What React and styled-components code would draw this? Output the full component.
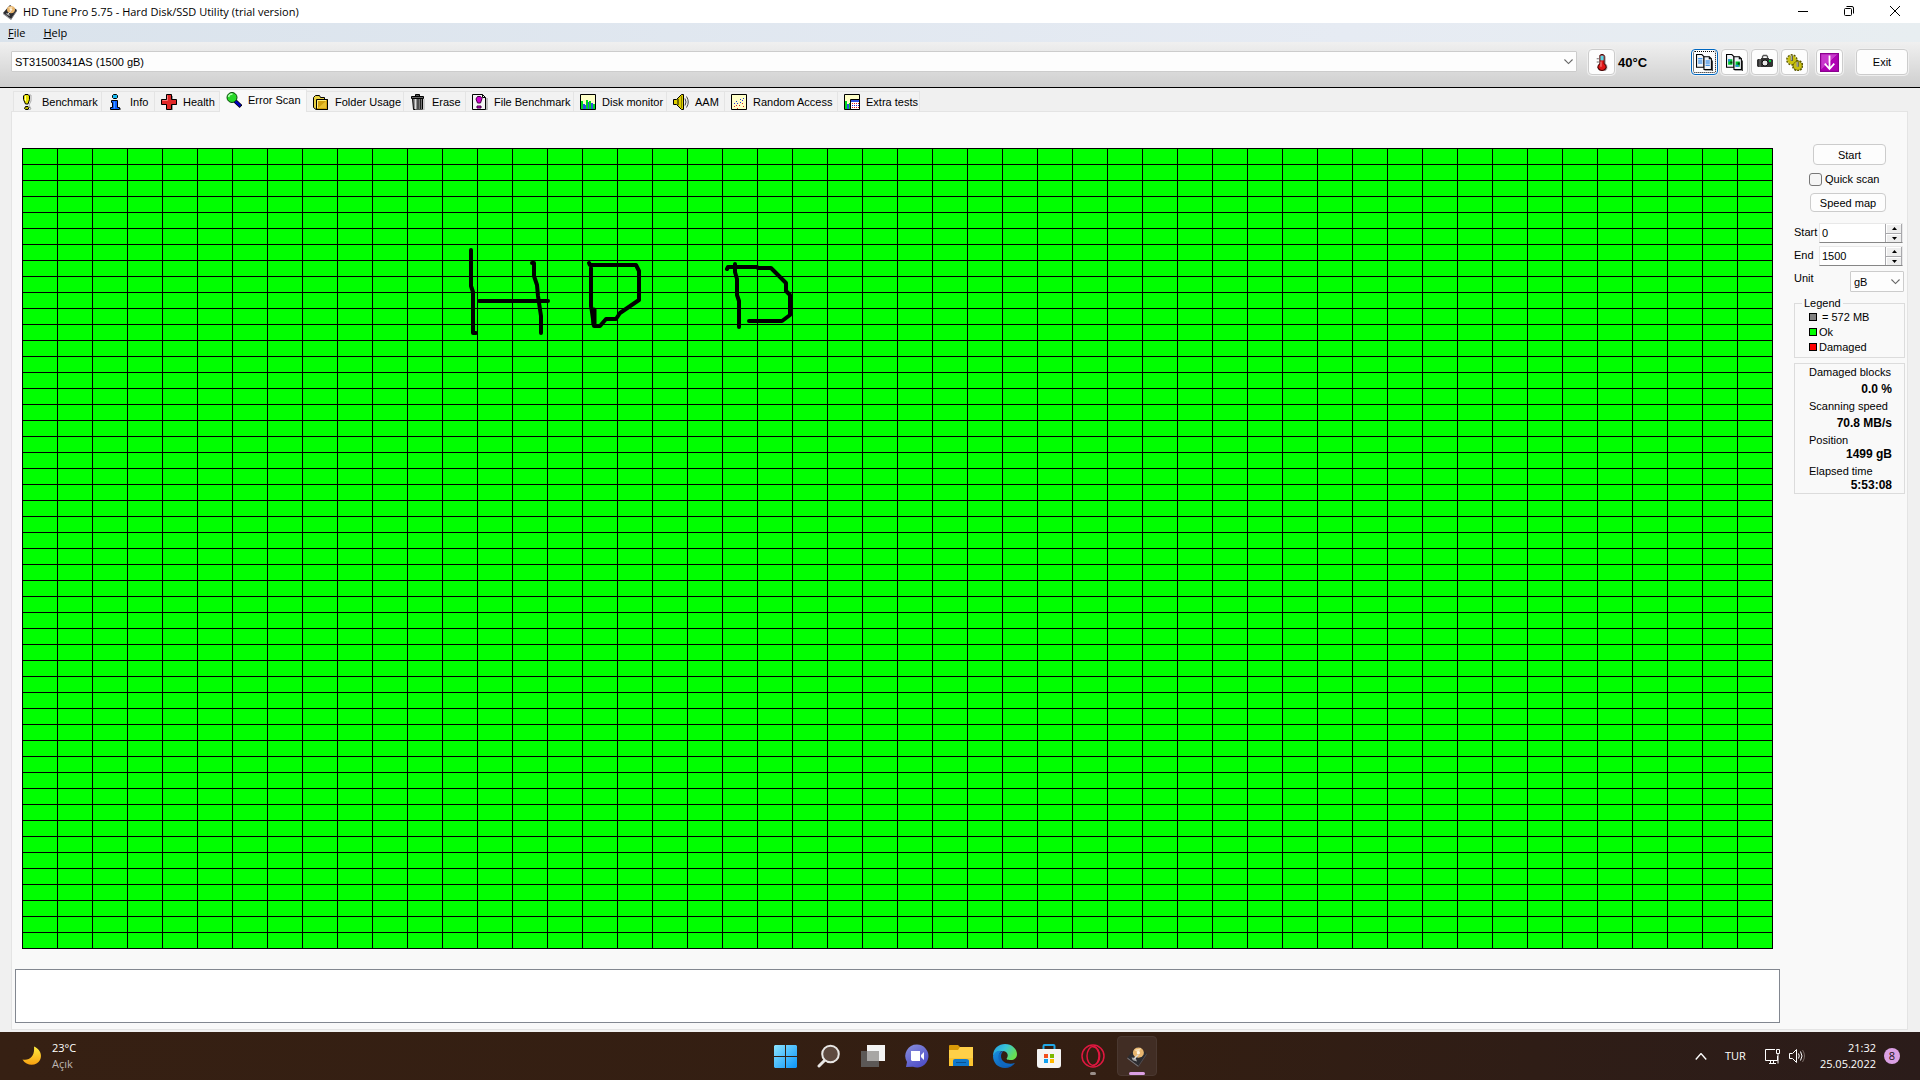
import React, { useState } from 'react';
import styled, { createGlobalStyle, css } from 'styled-components';

const GlobalStyle = createGlobalStyle`
  * {
    box-sizing: border-box;
  }
  body {
    margin: 0;
    background: #f0f0f0;
    color: #000;
    font-family: 'Liberation Sans', Arial, sans-serif;
    font-size: 11px;
  }
  button, input, select, textarea {
    font: inherit;
    color: inherit;
    margin: 0;
  }
`;

const Desktop = styled.div`
  min-height: 100vh;
  display: flex;
  flex-direction: column;
`;

/* window frame */

const TitleBar = styled.header`
  height: 23px;
  padding: 0 2px;
  display: flex;
  align-items: flex-start;
  background: #fff;
`;

const Title = styled.h1`
  flex: 1;
  display: flex;
  align-items: center;
  gap: 5px;
  margin: 0;
  height: 23px;
  font: 400 11px 'Open Sans', sans-serif;
`;

const WindowButton = styled.button`
  width: 46px;
  height: 21px;
  padding: 0;
  border: 0;
  background: none;
  display: flex;
  align-items: center;
  justify-content: center;
`;

const MenuBar = styled.nav`
  height: 19px;
  padding: 0 8px;
  display: flex;
  align-items: center;
  gap: 18px;
  background: linear-gradient(90deg, #dae3ec, #e6ebf3 70%, #e8eef1);
`;

const MenuItem = styled.button`
  padding: 0;
  border: 0;
  background: none;
  font: 400 11px 'Open Sans', sans-serif;
`;

/* toolbar */

const Toolbar = styled.div`
  height: 46px;
  padding: 7px 12px 0 11px;
  display: flex;
  align-items: flex-start;
  background: linear-gradient(#f0f0f0, #cecece);
  border-bottom: 1px solid #000;
`;

const SelectBox = styled.div`
  position: relative;
  flex: ${({ $wide }) => ($wide ? '1' : '0 0 54px')};
  height: 21px;
  margin-top: 2px;

  select {
    appearance: none;
    width: 100%;
    height: 100%;
    padding: 0 18px 0 3px;
    border: 1px solid #ccc;
    border-radius: 1px;
    background: #fdfdfd;
    outline: 0;
  }
  svg {
    position: absolute;
    right: 4px;
    top: 8px;
    pointer-events: none;
  }
`;

const PushButton = styled.button`
  width: ${({ $width }) => $width || 27}px;
  height: ${({ $height }) => $height || 26}px;
  padding: 0;
  display: flex;
  align-items: center;
  justify-content: center;
  border: 1px solid #ccc;
  border-radius: 4px;
  background: #fdfdfd;
  ${({ $raised }) => $raised && css`
    box-shadow: 0 0 0 1px #efefef;
  `}
  ${({ $focused }) => $focused && css`
    border-color: #0067c0;
    outline: 1px dotted #000;
    outline-offset: -3px;
  `}
`;

const Thermometer = styled.div`
  display: flex;
  align-items: center;
  gap: 3px;
  width: 103px;
  margin-left: 11px;
  font-size: 13px;
  font-weight: 700;
`;

const ToolGroup = styled.div`
  display: flex;
  gap: 3px;
  margin-right: ${({ $end }) => $end}px;
`;

/* tabs */

const TabBar = styled.div`
  display: flex;
  align-items: flex-end;
  height: 23px;
  padding: 0 13px;
`;

const Tab = styled.button`
  flex: 0 0 ${({ $width }) => $width}px;
  height: ${({ $active }) => ($active ? 23 : 20)}px;
  padding: 0 0 0 6px;
  display: flex;
  align-items: center;
  gap: 6px;
  white-space: nowrap;
  border: 1px solid #e4e4e4;
  border-width: 1px 1px 0 0;
  background: ${({ $active }) => ($active ? '#f9f9f9' : '#f2f2f2')};
  ${({ $active }) => $active && css`
    margin-bottom: -1px;
    padding-bottom: 2px;
    z-index: 1;
  `}
  &:first-child {
    border-left-width: 1px;
  }
`;

const Panel = styled.main`
  flex: 1;
  display: flex;
  gap: 14px;
  margin: 0 12px 2px 11px;
  padding: 0 2px 6px 3px;
  border: 1px solid #e4e4e4;
  background: #f9f9f9;
`;

const ScanArea = styled.section`
  flex: 1;
  display: flex;
  flex-direction: column;
  gap: 20px;
  padding-top: 36px;
`;

const BlockMap = styled.div`
  position: relative;
  flex: 1;
  margin: 0 7px;
  display: grid;
  grid-template-columns: repeat(50, 1fr);
  grid-template-rows: repeat(50, 1fr);
  gap: 1px;
  border: 1px solid #000;
  background: #000;
`;

const Block = styled.i`
  background: #0f0;
`;

const Scribble = styled.svg`
  position: absolute;
  inset: -1px;
  width: calc(100% + 2px);
  height: calc(100% + 2px);
  fill: none;
  stroke: #000;
  stroke-width: 4;
  stroke-linejoin: round;
  stroke-linecap: round;
`;

const LogBox = styled.textarea`
  height: 54px;
  resize: none;
  border: 1px solid #828790;
  background: #fff;
  outline: 0;
`;

/* sidebar */

const Sidebar = styled.aside`
  flex: 0 0 111px;
  display: flex;
  flex-direction: column;
  padding-top: 32px;
`;

const Actions = styled.div`
  display: flex;
  flex-direction: column;
  align-items: flex-end;
  gap: 6px;
  padding-right: 19px;
  margin-bottom: 11px;
`;

const CheckLabel = styled.label`
  align-self: flex-start;
  display: flex;
  align-items: center;
  gap: 3px;
  height: 16px;
  margin-left: 15px;

  input {
    appearance: none;
    width: 13px;
    height: 13px;
    border: 1px solid #777;
    border-radius: 3px;
    background: #f5f5f5;
  }
`;

const Field = styled.div`
  display: flex;
  align-items: flex-start;
  justify-content: space-between;
  height: ${({ $height }) => $height || 20}px;
  padding-right: ${({ $height }) => ($height ? 1 : 2)}px;
  margin-bottom: 3px;

  > label {
    line-height: 18px;
  }
`;

const Spinner = styled.div`
  width: 84px;
  height: 20px;
  display: flex;
  background: #fff;
  border: 1px solid #e8e8e8;
  border-bottom-color: #868686;

  input {
    flex: 1;
    min-width: 0;
    padding: 0 2px;
    border: 0;
    background: none;
    outline: 0;
  }
  div {
    width: 17px;
    display: grid;
    grid-template-rows: 1fr 1fr;
    gap: 1px;
    padding: 0 1px;
    background: #a8a8ac;
  }
  button {
    display: flex;
    align-items: center;
    justify-content: center;
    padding: 0;
    border: 1px solid #fff;
    border-width: 1px 0 0 1px;
    background: #eee;
  }
`;

const Legend = styled.fieldset`
  min-width: 0;
  margin: 0 0 5px;
  padding: 0 0 3px 14px;
  border: 1px solid #dcdcdc;

  legend {
    margin-left: -7px;
    padding: 0 2px;
    line-height: 12px;
  }
`;

const LegendItem = styled.div`
  display: flex;
  align-items: center;
  gap: ${({ $gap }) => $gap}px;
  height: 15px;

  span {
    width: 8px;
    height: 8px;
    border: 1px solid #000;
    background: ${({ $color }) => $color};
  }
`;

const Stats = styled.dl`
  margin: 0;
  padding: 1px 12px 1px 14px;
  display: flex;
  flex-direction: column;
  gap: 3px;
  border: 1px solid #dcdcdc;
  line-height: 14px;
`;

const Stat = styled.div`
  display: flex;
  flex-direction: column;
  gap: ${({ $roomy }) => ($roomy ? 3 : 0)}px;
  white-space: nowrap;

  dd {
    margin: 0;
    text-align: right;
    font-size: 12px;
    font-weight: 700;
  }
`;

/* taskbar */

const Taskbar = styled.footer`
  height: 48px;
  display: grid;
  grid-template-columns: 1fr auto 1fr;
  align-items: center;
  background: linear-gradient(90deg, #362013, #331e12 60%, #2b1c1a);
  color: #fff;
  font: 400 11px/16px 'Open Sans', sans-serif;
`;

const Weather = styled.button`
  display: flex;
  align-items: center;
  gap: 10px;
  padding: 0 0 0 22px;
  border: 0;
  background: none;
  text-align: left;

  small {
    display: block;
    font-size: 11px;
    color: #bdb6b2;
  }
`;

const Pinned = styled.div`
  display: flex;
  gap: 4px;
  padding-left: 2px;
`;

const PinnedApp = styled.button`
  position: relative;
  width: 40px;
  height: 40px;
  padding: 0;
  display: flex;
  align-items: center;
  justify-content: center;
  border: 1px solid ${({ $active }) => ($active ? '#4a3830' : 'transparent')};
  border-radius: 4px;
  background: ${({ $active }) => ($active ? '#412d24' : 'none')};

  &::after {
    content: '';
    display: ${({ $running, $active }) => ($running || $active ? 'block' : 'none')};
    position: absolute;
    bottom: 0;
    width: ${({ $active }) => ($active ? 16 : 6)}px;
    height: 3px;
    border-radius: 2px;
    background: ${({ $active }) => ($active ? '#dba0e4' : '#9a8f8a')};
  }
`;

const Tray = styled.div`
  display: flex;
  align-items: center;
  justify-content: flex-end;
  padding-right: 20px;

  button {
    padding: 0;
    border: 0;
    background: none;
    display: flex;
    align-items: center;
  }
`;

const TrayGroup = styled.div`
  display: flex;
  align-items: center;
  gap: ${({ $gap }) => $gap}px;
  margin-right: ${({ $end }) => $end}px;
`;

const Clock = styled.time`
  text-align: right;
  margin-right: 8px;
`;

const Badge = styled.span`
  width: 16px;
  height: 16px;
  border-radius: 50%;
  background: #dba0e4;
  color: #1c1016;
  text-align: center;
`;

/* icons */

const Icon = ({ size = 16, children, ...rest }) => (
  <svg width={size} height={size} viewBox="0 0 16 16" fill="none" aria-hidden="true" {...rest}>
    {children}
  </svg>
);

const DiskIcon = ({ size = 16 }) => (
  <Icon size={size}>
    <path d="M1 9 8 1l7 5-6 9z" fill="#2c2c30" />
    <path d="m1 9 8 6v1L1 10z" fill="#77777c" />
    <path d="m9 15 6-9v1l-6 9z" fill="#505056" />
    <ellipse cx="9" cy="5.6" rx="4" ry="3.7" fill="#e8b56e" />
    <path d="M6 3.5 9 5.6l2-3.2z" fill="#f8ddb0" />
    <circle cx="9" cy="5.6" r="1.2" fill="#fff4e0" />
    <path d="m4 9 3 .5 1 2.5-3-1z" fill="#aaa" />
    <path d="m6 10 3-3" stroke="#ddd" />
  </Icon>
);

const Chevron = ({ size = 9, up, color = '#666' }) => (
  <svg width={size} height={size / 2 + 1} viewBox="0 0 10 6" fill="none" stroke={color} strokeWidth="1.2" aria-hidden="true">
    <path d={up ? 'm.5 5.5 4.5-5 4.5 5' : 'm.5.5 4.5 4.5L9.5.5'} />
  </svg>
);

const Triangle = ({ down }) => (
  <svg width="5" height="3" viewBox="0 0 5 3" aria-hidden="true">
    <path d={down ? 'M0 0h5L2.5 3z' : 'M0 3h5L2.5 0z'} fill="#000" />
  </svg>
);

const tabIcons = {
  benchmark: (
    <Icon>
      <path d="M8 1h3v6l-2 4 2 4-4 1" stroke="#aaa" />
      <path d="M5 .5h3l1.5 1.5v3.500L8 10H5.500L3.500 5.500V2z" fill="#e8e000" stroke="#000" />
      <path d="M5.500 2v5" stroke="#ffffb0" />
      <path d="M5.500 12.500h2.500l1 1-1 2H5.500l-1-1z" fill="#b8b000" stroke="#000" />
    </Icon>
  ),
  info: (
    <Icon>
      <path d="M5.500.5h3l1 1v2l-1 1h-3l-1-1v-2z" fill="#18b8f0" stroke="#000" />
      <path d="M3.500 6.500h6v7h2v2h-9v-2h2v-5h-1z" fill="#1060ff" stroke="#000" />
      <path d="M6.500 7.500v7" stroke="#40a0ff" />
      <path d="M12.500 14v2" stroke="#888" />
    </Icon>
  ),
  health: (
    <Icon>
      <path d="M6 2h6v4h4v5h-4v5H6v-5H2V6h4z" fill="#999" />
      <path d="M5.500.5h5v5h5v5h-5v5h-5v-5h-5v-5h5z" fill="#e02828" stroke="#000" />
      <path d="M6.500 1.500v5h-5" stroke="#f87878" />
    </Icon>
  ),
  scan: (
    <Icon>
      <path d="m8 8 7 6.500" stroke="#000" strokeWidth="4" />
      <path d="m8.500 8.500 6 5.500" stroke="#0000c0" strokeWidth="2.500" />
      <circle cx="6" cy="5.500" r="5" fill="#28d828" stroke="#064806" />
      <path d="M2.500 5C3 2.500 4.500 2 6.500 2" stroke="#b0ffb0" strokeWidth="1.500" />
    </Icon>
  ),
  folder: (
    <Icon>
      <path d="M.5 13.500v-10l2-2h4l1 2h4v2h3v10H3z" fill="#e8d040" stroke="#000" />
      <path d="M3.500 15.500v-10h11v10z" fill="#d0a010" stroke="#000" />
      <path d="M4.500 14V6.500H13" stroke="#fff080" />
      <path d="M5 14 13 7v7z" fill="#e8c030" />
    </Icon>
  ),
  erase: (
    <Icon>
      <path d="M5.500.5h4v2h-4z" fill="#555" stroke="#000" />
      <path d="M1.500 2.500h12v2h-12z" fill="#666" stroke="#000" />
      <path d="M2.500 4.500h10v11h-9z" fill="#777" stroke="#000" />
      <path d="M5.500 5v10" stroke="#ddd" strokeWidth="1.500" />
      <path d="M8 5v10m2.500-10v10" stroke="#222" />
      <path d="M14 5v11H5" stroke="#aaa" />
    </Icon>
  ),
  file: (
    <Icon>
      <path d="M2 16h13V4" stroke="#888" />
      <path d="M.5.5h10l3 3v12H.5z" fill="#f4f4f4" stroke="#000" />
      <path d="M10.500.5v3h3" stroke="#000" />
      <path d="M5.500 2.500h3l1.500 2-1.500 4.500h-3L4 5z" fill="#d000d0" stroke="#400040" />
      <path d="M5 12h4v2H5z" fill="#d000d0" stroke="#400040" />
    </Icon>
  ),
  monitor: (
    <Icon>
      <path d="M.5.5h15v15H.5z" fill="#ffffc8" stroke="#000" />
      <path d="M1 7h2v8H1zm5-1h2v9H6zm3 1h2v8H9zm4 3h2v5h-2z" fill="#00d820" />
      <path d="M3 10h2v5H3zm2 1h1v4H5zm3-3h1v7H8zm3 1h2v6h-2z" fill="#3050e0" />
    </Icon>
  ),
  aam: (
    <Icon>
      <path d="M.5 5.500h3l5-5h2v15h-2l-5-5h-3z" fill="#e0d000" stroke="#000" />
      <path d="M5 5v6" stroke="#000" />
      <path d="M8.500 2v12" stroke="#888000" />
      <path d="M12 4.500q2 3.500 0 7m1.500-9q3.500 5.500 0 11" stroke="#444" />
    </Icon>
  ),
  random: (
    <Icon>
      <path d="M.5.5h15v15H.5z" fill="#ffffc8" stroke="#000" />
      <path d="M3 9h1v1H3zm2-2h1v1H5zm1 2h1v1H6zm3-4h1v1H9zm0 3h1v1H9zm3-4h1v1h-1zm-1 2h1v1h-1z" fill="#2030e0" />
      <path d="M3 12h1v1H3zm2-1h1v1H5zm3 0h1v1H8zm-2 3h1v1H6zm5-5h1v1h-1zm1 3h1v1h-1z" fill="#e02020" />
    </Icon>
  ),
  extra: (
    <Icon>
      <path d="M.5.5h15v15H.5z" fill="#ffffc8" stroke="#000" />
      <path d="M1 7h2v8H1zm4 2h1v6H5z" fill="#00d820" />
      <path d="M3 10h2v5H3z" fill="#3050e0" />
      <path d="M6.500 5.500h9v10h-9z" fill="#fff" stroke="#000" />
      <path d="M7 6h8v2H7z" fill="#3050e0" />
      <path d="M8 9.500h7m-7 4h7" stroke="#e02020" strokeDasharray="1 1" />
      <path d="M8 11.500h7" stroke="#2020e0" strokeDasharray="1 1" />
    </Icon>
  ),
};

const ThermoIcon = () => (
  <Icon size={17}>
    <path d="M11.500 2v7l1.500 2v3l-2 2" stroke="#aaa" />
    <path d="M6.500 1.500q2-2 4 0V9q2 1.500 2 3.500-1 3-4 3t-4-3q0-2 2-3.500z" fill="#e01818" stroke="#400" />
    <path d="M7 1.500h3V6H7z" fill="#58d8e8" />
    <path d="M7.500 7v5" stroke="#ff9090" />
    <path d="M3.500 4.500h2m-2 3h2" stroke="#666" />
  </Icon>
);

const CopyIcon = ({ picture }) => (
  <Icon size={17}>
    <path d="M.5.5h5l2 2v10h-7z" fill="#f0f4f8" stroke="#000" />
    <path d="M15.500 6v10H8" stroke="#444" />
    <path d="M7.500 2.500h5l2 2v10h-7z" fill="#f0f4f8" stroke="#000" />
    <path d="M12.500 2.500v2h2" stroke="#000" />
    {picture ? (
      <g>
        <path d="M2 5h4v5H2zm7 2h4v5H9z" fill="#00c828" />
        <path d="M2 5h2v2H2zm7 5h3v2H9z" fill="#2090e0" />
        <path d="M4 7h2v2H4zm7 1h2v2h-2z" fill="#084010" />
      </g>
    ) : (
      <path d="M2 4.500h4m-4 2h4m-4 2h4m3-2h4m-4 2h4m-4 2h4" stroke="#0870e0" />
    )}
  </Icon>
);

const CameraIcon = () => (
  <Icon>
    <path d="M5.500 4V2.500l1-1h3l1 1V4" stroke="#555" strokeWidth="1.300" />
    <path d="M4 4h8v1h3l1 1v6l-1 1H1l-1-1V6l1-1h3z" fill="#333" />
    <path d="M3 5v8" stroke="#777" />
    <circle cx="8" cy="9" r="3" fill="#e8e8e8" stroke="#111" />
    <path d="M12 6h2v2h-2z" fill="#00d040" />
  </Icon>
);

const GearsIcon = () => (
  <Icon size={17}>
    <circle cx="5.500" cy="5.500" r="4.500" stroke="#5c5800" strokeWidth="1.800" strokeDasharray="1.800 1" />
    <circle cx="11" cy="11" r="4.500" stroke="#5c5800" strokeWidth="1.800" strokeDasharray="1.800 1" />
    <circle cx="5.500" cy="5.500" r="4.200" fill="#c8c010" />
    <circle cx="11" cy="11" r="4.200" fill="#c8c010" stroke="#5c5800" strokeWidth=".6" />
    <path d="M5.500 1.500V6.500m5.500 1v4.500" stroke="#555" strokeWidth="2" />
    <path d="M5 1.500V6m5.500 1.500V12" stroke="#ccc" strokeWidth=".8" />
  </Icon>
);

const DownIcon = () => (
  <Icon size={19}>
    <path d="M0 0h16v16H0z" fill="#8c0090" />
    <path d="M1 1h14L1 14z" fill="#c838cc" />
    <path d="M1 14 15 1v14H1z" fill="#b000b4" />
    <path d="M8 2v11M4 9l4 4.500L12 9" stroke="#fff" strokeWidth="1.500" />
  </Icon>
);

const MoonIcon = () => (
  <svg width="20" height="20" viewBox="0 0 20 20" aria-hidden="true">
    <defs>
      <linearGradient id="moon" x1="0" y1="0" x2="0" y2="1">
        <stop stopColor="#ffec40" />
        <stop offset="1" stopColor="#f8a010" />
      </linearGradient>
    </defs>
    <path d="M12 .5C18 3 20.500 9 18 14c-3 6-13 7-17.500-.5C8 15 13 10 12 .5z" fill="url(#moon)" />
  </svg>
);

const StartIcon = () => (
  <svg width="23" height="23" viewBox="0 0 23 23" aria-hidden="true">
    <defs>
      <linearGradient id="win" x1="0" y1="0" x2="1" y2="1">
        <stop stopColor="#8ce4ff" />
        <stop offset="1" stopColor="#0a94f8" />
      </linearGradient>
    </defs>
    <path d="M1 0h10v11H0V1zm11 0h10l1 1v10H12zM0 12h11v11H1l-1-1zm12 0h11v10l-1 1H12z" fill="url(#win)" />
  </svg>
);

const SearchIcon = () => (
  <svg width="24" height="24" viewBox="0 0 24 24" fill="none" stroke="#e8e6e4" aria-hidden="true">
    <path d="m8 16-6 6" strokeWidth="3" strokeLinecap="round" />
    <circle cx="13.500" cy="10" r="8.300" fill="#5e4a40" strokeWidth="2" />
  </svg>
);

const TaskViewIcon = () => (
  <svg width="24" height="24" viewBox="0 0 24 24" aria-hidden="true">
    <path d="M6 1h18v16H6z" fill="#f4f4f4" />
    <path d="M0 7h18v16H0z" fill="#5c5856" />
    <path d="M6 7h12v10H6z" fill="#a8a6a4" />
  </svg>
);

const ChatIcon = () => (
  <svg width="24" height="24" viewBox="0 0 24 24" aria-hidden="true">
    <defs>
      <linearGradient id="chat" x1="0" y1="0" x2=".6" y2="1">
        <stop stopColor="#8a90dc" />
        <stop offset="1" stopColor="#5050c8" />
      </linearGradient>
    </defs>
    <path d="M12 .5a11.500 11.500 0 1 1-4 22.300L1 23l1-5A11.500 11.500 0 0 1 12 .5z" fill="url(#chat)" />
    <path d="M6 7h9v10H7l-1-1zm10 4 3-3v8l-3-3z" fill="#fff" />
  </svg>
);

const ExplorerIcon = () => (
  <svg width="24" height="24" viewBox="0 0 24 24" aria-hidden="true">
    <path d="M0 2q0-1 1-1h8l2 2v4H0z" fill="#d89a08" />
    <path d="M0 6h9l2-3h13v19H0z" fill="#ffd048" />
    <path d="M0 14h24v8H0z" fill="#fcc430" />
    <path d="M4 22v-5q0-2 2-2h11q3 0 3 2v5z" fill="#1078cc" />
    <path d="M7 18h10v1H7z" fill="#0a5090" />
  </svg>
);

const EdgeIcon = () => (
  <svg width="24" height="24" viewBox="0 0 24 24" aria-hidden="true">
    <defs>
      <linearGradient id="edgeTop" x1="0" y1="0" x2="1" y2=".5">
        <stop stopColor="#2098e0" />
        <stop offset=".5" stopColor="#38c4d8" />
        <stop offset="1" stopColor="#68e050" />
      </linearGradient>
      <linearGradient id="edgeBody" x1="0" y1="0" x2="1" y2="1">
        <stop stopColor="#1890e0" />
        <stop offset="1" stopColor="#0c50a8" />
      </linearGradient>
    </defs>
    <path d="M0 12C0 4 6 0 12 0c7 0 12 5 12 10 0 4-3 6-6 6-4 0-5-1-4-2 2-3 0-7-4-7-5 0-9 3-10 5z" fill="url(#edgeTop)" />
    <path d="M0 12c1-4 5-6 8-5-3 3-3 13 8 14 2 0 4-1 6-2-2 3-6 5-10 5C5 24 0 19 0 12z" fill="url(#edgeBody)" />
    <path d="M8 12c0-3 2-5 3-5-4 0-7 4-5 9 2 6 9 9 16 3-6 2-14 0-14-7z" fill="#1068c0" />
  </svg>
);

const StoreIcon = () => (
  <svg width="24" height="24" viewBox="0 0 24 24" aria-hidden="true">
    <path d="M6.500 6V2q0-1 1-1h9q1 0 1 1v4" fill="none" stroke="#20a8e8" strokeWidth="2" />
    <path d="M0 6q0-1 1-1h22q1 0 1 1v15q0 3-3 3H3q-3 0-3-3z" fill="#f4f4f4" />
    <path d="M7 10h4v4H7z" fill="#f05020" />
    <path d="M13 10h4v4h-4z" fill="#7cb800" />
    <path d="M7 15h4v4H7z" fill="#10a0f0" />
    <path d="M13 15h4v4h-4z" fill="#ffb800" />
  </svg>
);

const OperaIcon = () => (
  <svg width="24" height="24" viewBox="0 0 24 24" fill="none" stroke="#e01840" aria-hidden="true">
    <circle cx="12" cy="12" r="11" strokeWidth="1.500" />
    <ellipse cx="12" cy="12" rx="6" ry="9.500" strokeWidth="1.500" />
    <path d="M12 2.500c9 1 9 18 0 19" strokeWidth="1.300" />
  </svg>
);

const tabs = [
  { id: 'benchmark', label: 'Benchmark', width: 89 },
  { id: 'info', label: 'Info', width: 53 },
  { id: 'health', label: 'Health', width: 65 },
  { id: 'scan', label: 'Error Scan', width: 87 },
  { id: 'folder', label: 'Folder Usage', width: 97 },
  { id: 'erase', label: 'Erase', width: 62 },
  { id: 'file', label: 'File Benchmark', width: 108 },
  { id: 'monitor', label: 'Disk monitor', width: 93 },
  { id: 'aam', label: 'AAM', width: 58 },
  { id: 'random', label: 'Random Access', width: 113 },
  { id: 'extra', label: 'Extra tests', width: 82 },
];

const legend = [
  { color: '#808080', label: '= 572 MB', gap: 5 },
  { color: '#00ff00', label: 'Ok', gap: 2 },
  { color: '#ff0000', label: 'Damaged', gap: 2 },
];

const stats = [
  { label: 'Damaged blocks', value: '0.0 %', roomy: true },
  { label: 'Scanning speed', value: '70.8 MB/s', roomy: true },
  { label: 'Position', value: '1499 gB' },
  { label: 'Elapsed time', value: '5:53:08' },
];

const pinned = [
  { name: 'Start', icon: <StartIcon /> },
  { name: 'Search', icon: <SearchIcon /> },
  { name: 'Task view', icon: <TaskViewIcon /> },
  { name: 'Chat', icon: <ChatIcon /> },
  { name: 'File Explorer', icon: <ExplorerIcon /> },
  { name: 'Edge', icon: <EdgeIcon /> },
  { name: 'Store', icon: <StoreIcon /> },
  { name: 'Opera', icon: <OperaIcon />, running: true },
  { name: 'HD Tune Pro', icon: <DiskIcon size={22} />, active: true },
];

const blocks = Array.from({ length: 2500 }, (_, i) => i);

function NumberField({ id, label, initial }) {
  const [value, setValue] = useState(initial);

  return (
    <Field>
      <label htmlFor={id}>{label}</label>
      <Spinner>
        <input id={id} value={value} onChange={(e) => setValue(Number(e.target.value) || 0)} />
        <div>
          <button aria-label={`${label} up`} onClick={() => setValue(value + 1)}>
            <Triangle />
          </button>
          <button aria-label={`${label} down`} onClick={() => setValue(value - 1)}>
            <Triangle down />
          </button>
        </div>
      </Spinner>
    </Field>
  );
}

export default function App() {
  const [activeTab, setActiveTab] = useState('scan');

  return (
    <Desktop>
      <GlobalStyle />
      <TitleBar>
        <Title>
          <DiskIcon />
          HD Tune Pro 5.75 - Hard Disk/SSD Utility (trial version)
        </Title>
        <WindowButton aria-label="Minimize">
          <svg width="10" height="10" stroke="#000"><path d="M0 5.500h10" /></svg>
        </WindowButton>
        <WindowButton aria-label="Restore">
          <svg width="10" height="10" fill="none" stroke="#000">
            <rect x=".5" y="2.500" width="7" height="7" rx="1" />
            <path d="M2.500.5H8q1.500 0 1.500 1.500v5.500" />
          </svg>
        </WindowButton>
        <WindowButton aria-label="Close">
          <svg width="10" height="10" stroke="#000"><path d="m0 0 10 10M10 0 0 10" /></svg>
        </WindowButton>
      </TitleBar>

      <MenuBar>
        <MenuItem><u>F</u>ile</MenuItem>
        <MenuItem><u>H</u>elp</MenuItem>
      </MenuBar>

      <Toolbar>
        <SelectBox $wide>
          <select aria-label="Drive">
            <option>ST31500341AS (1500 gB)</option>
          </select>
          <Chevron />
        </SelectBox>
        <Thermometer>
          <PushButton $raised aria-label="Temperature"><ThermoIcon /></PushButton>
          40°C
        </Thermometer>
        <ToolGroup $end={8}>
          <PushButton $raised $focused aria-label="Copy text"><CopyIcon /></PushButton>
          <PushButton $raised aria-label="Copy picture"><CopyIcon picture /></PushButton>
          <PushButton $raised aria-label="Save picture"><CameraIcon /></PushButton>
          <PushButton $raised aria-label="Options"><GearsIcon /></PushButton>
        </ToolGroup>
        <ToolGroup $end={13}>
          <PushButton $raised aria-label="Minimize to tray"><DownIcon /></PushButton>
        </ToolGroup>
        <PushButton $raised $width={52}>Exit</PushButton>
      </Toolbar>

      <TabBar role="tablist">
        {tabs.map(({ id, label, width }) => (
          <Tab
            key={id}
            role="tab"
            aria-selected={id === activeTab}
            $active={id === activeTab}
            $width={width}
            onClick={() => setActiveTab(id)}
          >
            {tabIcons[id]}
            {label}
          </Tab>
        ))}
      </TabBar>

      <Panel>
        <ScanArea>
          <BlockMap>
            {blocks.map((n) => <Block key={n} />)}
            <Scribble viewBox="0 0 1751 801" preserveAspectRatio="none">
              <path d="M449 102v36l2 6v41h3" />
              <path d="M457 153h69" />
              <path d="M510 115h2v13l3 9 1 11 3 20v17" />
              <path d="m567 115 1 2h46l3 6v29l-19 13-4 6h-10l-6 7h-6l-2-14-1-6v-38" />
              <path d="M572 162v14" strokeWidth="5" />
              <path d="m705 121 1-2h29l1 1h13l15 15v8l4 4v20l-8 6h-33" />
              <path d="M713 116v8l2 7v16l2 6v26" />
            </Scribble>
          </BlockMap>
          <LogBox readOnly aria-label="Scan log" />
        </ScanArea>

        <Sidebar>
          <Actions>
            <PushButton $width={73} $height={21}>Start</PushButton>
            <CheckLabel>
              <input type="checkbox" />
              Quick scan
            </CheckLabel>
            <PushButton $width={76} $height={19}>Speed map</PushButton>
          </Actions>
          <NumberField id="start" label="Start" initial={0} />
          <NumberField id="end" label="End" initial={1500} />
          <Field $height={25}>
            <label htmlFor="unit">Unit</label>
            <SelectBox>
              <select id="unit">
                <option>gB</option>
              </select>
              <Chevron />
            </SelectBox>
          </Field>
          <Legend>
            <legend>Legend</legend>
            {legend.map(({ color, label, gap }) => (
              <LegendItem key={label} $color={color} $gap={gap}>
                <span />
                {label}
              </LegendItem>
            ))}
          </Legend>
          <Stats>
            {stats.map(({ label, value, roomy }) => (
              <Stat key={label} $roomy={roomy}>
                <dt>{label}</dt>
                <dd>{value}</dd>
              </Stat>
            ))}
          </Stats>
        </Sidebar>
      </Panel>

      <Taskbar>
        <Weather>
          <MoonIcon />
          <span>
            23°C
            <small>Açık</small>
          </span>
        </Weather>
        <Pinned>
          {pinned.map(({ name, icon, active, running }) => (
            <PinnedApp key={name} aria-label={name} $active={active} $running={running}>
              {icon}
            </PinnedApp>
          ))}
        </Pinned>
        <Tray>
          <TrayGroup $gap={18} $end={18}>
            <button aria-label="Hidden icons"><Chevron up size={12} color="#fff" /></button>
            <button>TUR</button>
          </TrayGroup>
          <TrayGroup $gap={7} $end={14}>
            <svg width="18" height="17" viewBox="0 0 18 17" fill="none" stroke="#fff" aria-hidden="true">
              <path d="M11 1.500H1.500v11h12V8M5 15.500h7M6.500 12.500v3m3-3v3M12.500 1.500h3v4h-3zM14 5.500v10" />
            </svg>
            <svg width="17" height="16" viewBox="0 0 17 16" fill="none" stroke="#fff" aria-hidden="true">
              <path d="M.5 5.500h3l4-4v13l-4-4h-3zM9.500 5.500q1.500 2.500 0 5M11.500 3.500q3 4.500 0 9" />
              <path d="M13.500 2q4 6 0 12" stroke="#776a64" />
            </svg>
          </TrayGroup>
          <Clock>
            21:32
            <br />
            25.05.2022
          </Clock>
          <Badge>8</Badge>
        </Tray>
      </Taskbar>
    </Desktop>
  );
}
